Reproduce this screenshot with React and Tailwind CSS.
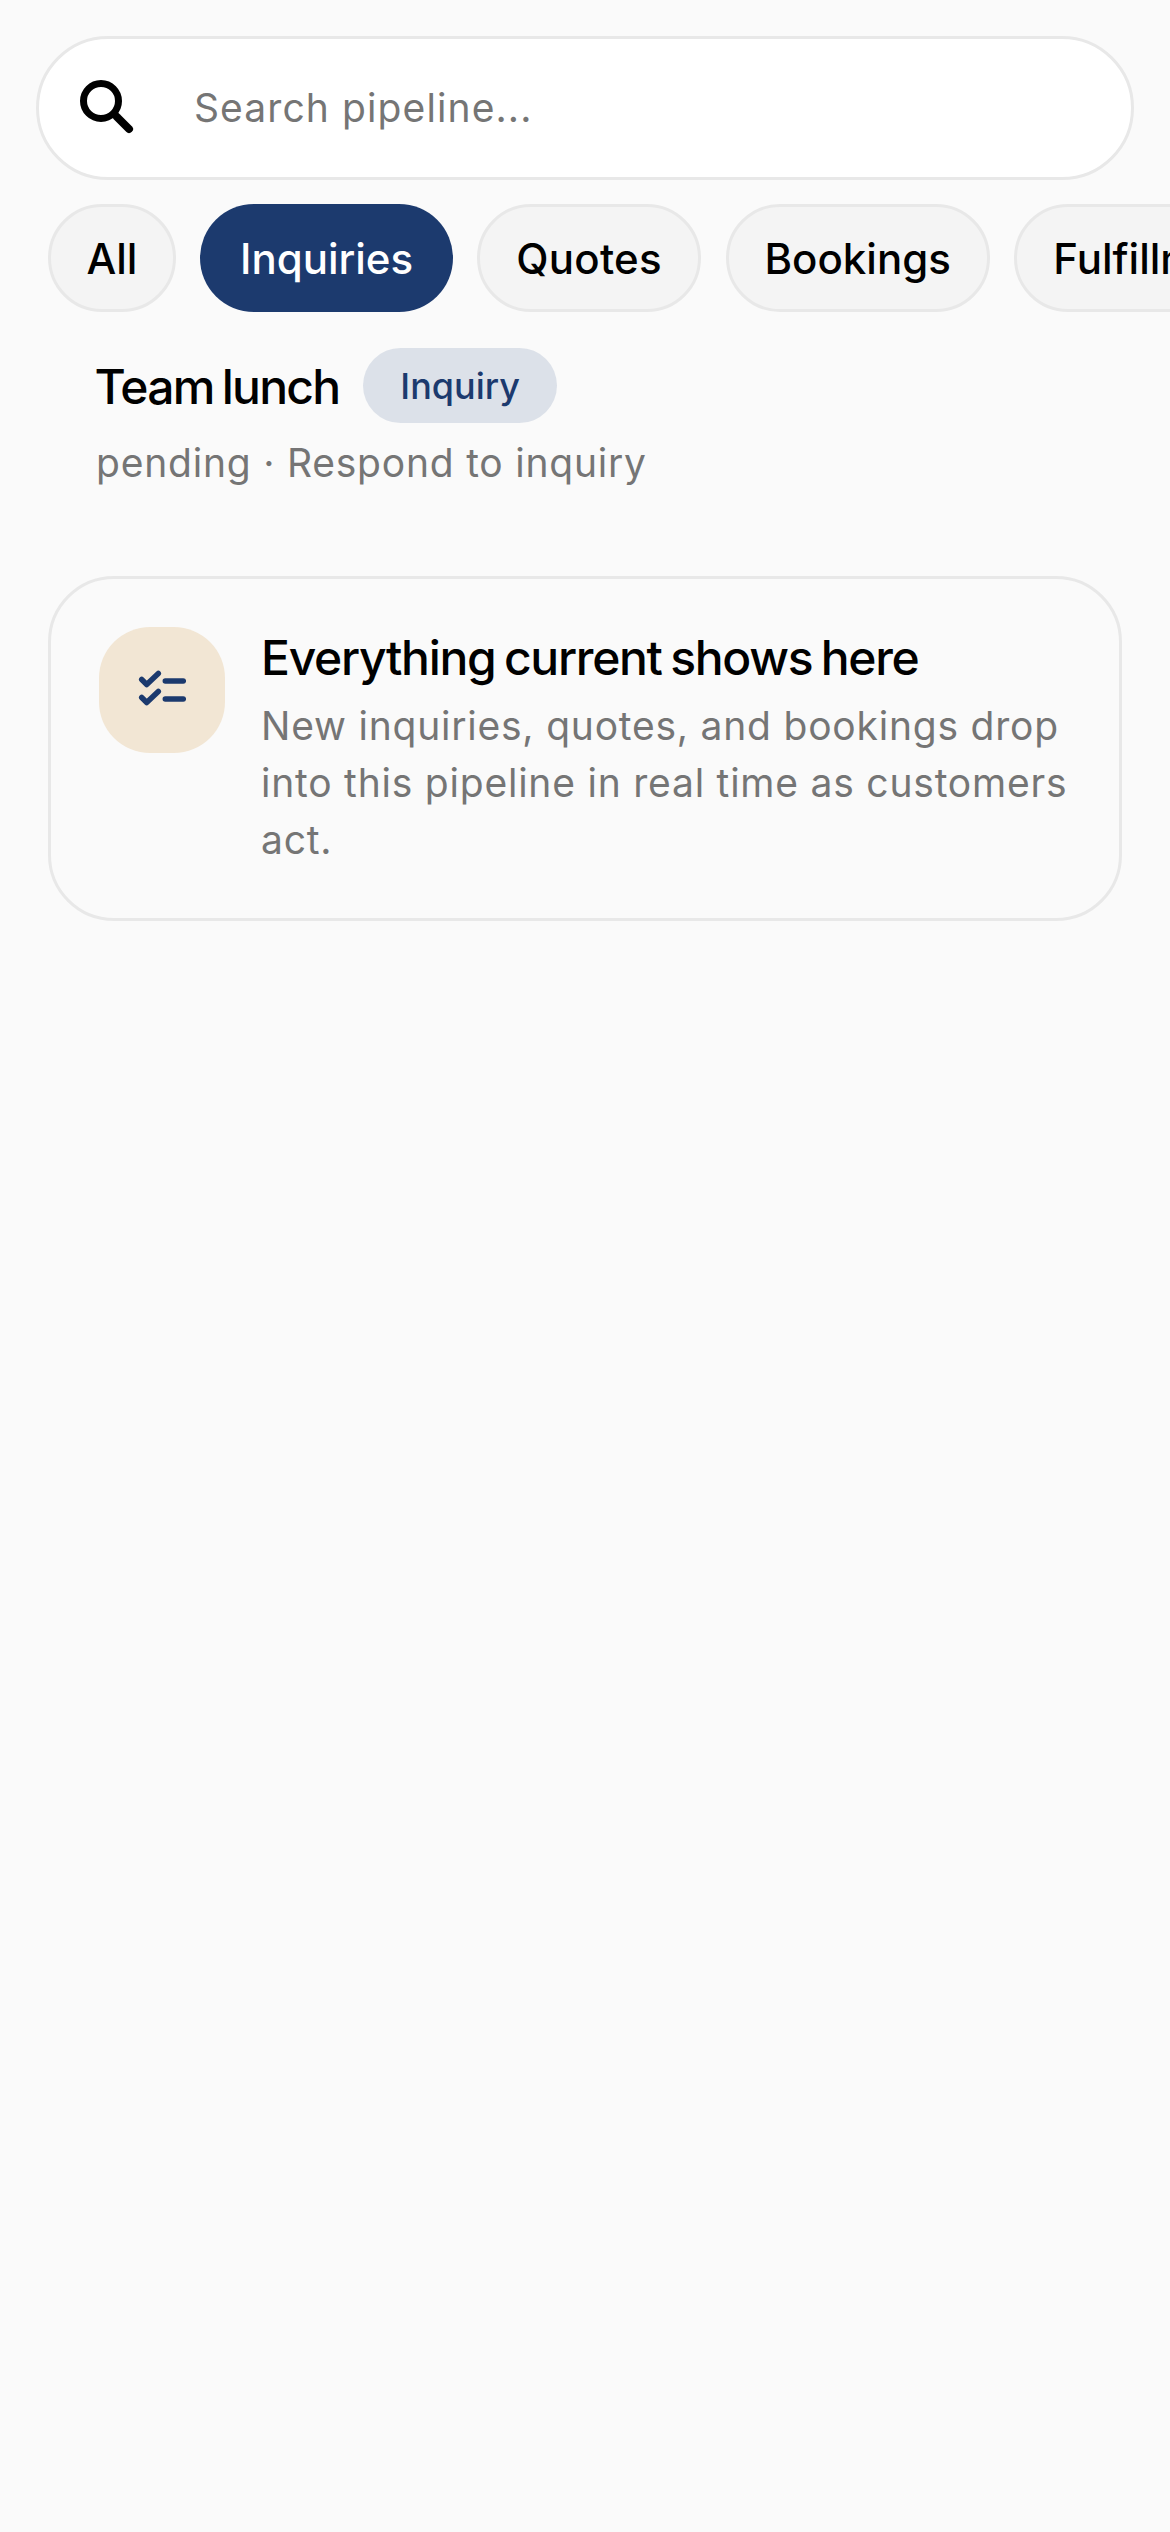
import React from "react";

const chipBase = "h-[108px] shrink-0 flex items-center rounded-[54px] text-[42px] font-medium";
const chipIdle = "bg-[#f4f4f4] border-[3px] border-[#e8e8e8] text-black";

export default function App() {
  return (
    <div className="w-[1170px] h-[2532px] bg-[#fafafa] overflow-hidden font-['Inter',sans-serif]">
      <div className="pt-[36px] px-[36px]">
        <div className="h-[144px] flex items-center bg-white border-[3px] border-[#e8e8e8] rounded-[72px] pl-[39px]">
          <svg width="60" height="60" viewBox="0 0 60 60" fill="none" className="shrink-0">
            <circle cx="23" cy="23" r="17.5" stroke="#000" strokeWidth="7" />
            <path d="M39 39L51 51" stroke="#000" strokeWidth="8" strokeLinecap="round" />
          </svg>
          <span className="ml-[56px] text-[39px] text-[#757575] tracking-[1.1px]">Search pipeline...</span>
        </div>
      </div>
      <div className="mt-[24px] pl-[48px] flex gap-[24.5px] overflow-hidden">
        <div className={`${chipBase} ${chipIdle} px-[35.5px]`}>All</div>
        <div className={`${chipBase} bg-[#1c3a6e] text-white px-[39.5px]`}>Inquiries</div>
        <div className={`${chipBase} ${chipIdle} px-[36px] tracking-[0.3px]`}>Quotes</div>
        <div className={`${chipBase} ${chipIdle} px-[36px]`}>Bookings</div>
        <div className={`${chipBase} ${chipIdle} px-[36px]`}>Fulfillment</div>
      </div>
      <div className="mt-[36px] pl-[96px]">
        <div className="flex items-center gap-[24px]">
          <span className="mt-[3px] -ml-[1.5px] text-[48px] font-medium text-black tracking-[-1.75px] [word-spacing:-3px]">Team lunch</span>
          <span className="h-[75px] flex items-center px-[37px] rounded-[38px] bg-[#dce1e9] text-[#1c3a6e] text-[36px] font-medium">Inquiry</span>
        </div>
        <div className="mt-[11px] text-[39px] leading-[58px] text-[#757575] tracking-[0.02em]">pending · Respond to inquiry</div>
      </div>
      <div className="mt-[84px] mx-[48px] border-[3px] border-[#e8e8e8] rounded-[66px] pt-[48px] pb-[50px] px-[48px] flex gap-[36px] items-start">
        <div className="w-[126px] h-[126px] shrink-0 rounded-[51px] bg-[#f2e6d4] flex items-center justify-center">
          <svg width="48" height="48" viewBox="0 0 48 48" fill="none">
            <path d="M3.7 13.5L8.7 18.5L20.3 7.5M3.7 31.5L8.7 36.5L20.3 25.5" stroke="#1c3a6e" strokeWidth="5.5" strokeLinecap="round" strokeLinejoin="round" />
            <path d="M27.3 15H45.3M27.3 33H45.3" stroke="#1c3a6e" strokeWidth="5.5" strokeLinecap="round" />
          </svg>
        </div>
        <div className="flex-1">
          <div className="text-[48px] leading-[62px] font-medium text-black tracking-[-1.3px] [word-spacing:-3px]">Everything current shows here</div>
          <div className="mt-[8px] text-[39px] leading-[57px] text-[#757575] tracking-[0.02em]">
            New inquiries, quotes, and bookings drop into this pipeline in real time as customers act.
          </div>
        </div>
      </div>
    </div>
  );
}
